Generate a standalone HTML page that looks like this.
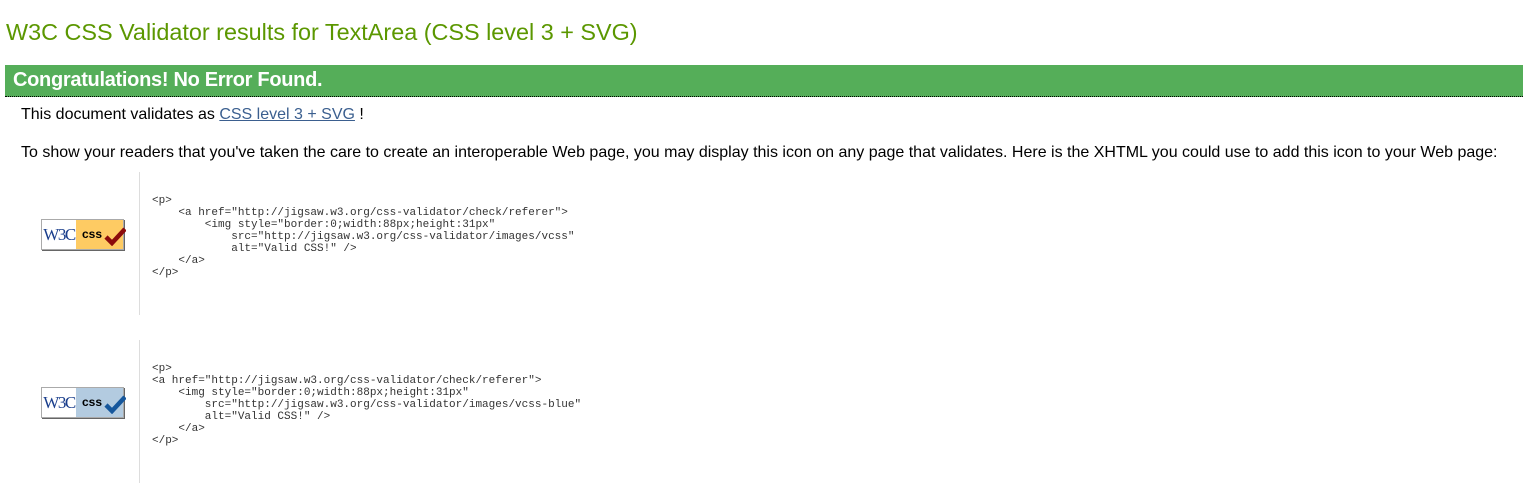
<!DOCTYPE html>
<html><head><meta charset="utf-8"><style>
body{margin:0;background:#fff;font-family:"Liberation Sans",Arial,sans-serif;color:#000;width:1523px;height:483px;overflow:hidden;position:relative}
h2{position:absolute;left:6px;top:19px;margin:0;font-weight:normal;font-size:23.4px;color:#5b9700}
.bar{position:absolute;left:5px;top:65px;width:1518px;height:31px;background:#55ae59;border-bottom:1px dotted #000}
.bar span{position:absolute;left:8px;top:4px;color:#fff;font-weight:bold;font-size:20px;letter-spacing:-0.3px}
p.t{position:absolute;left:21px;margin:0;font-size:16px}
a{color:#3b5f8f}
.vl{position:absolute;left:139px;width:1px;background:#ddd}
pre{position:absolute;left:152px;margin:0;font-family:"Liberation Mono","DejaVu Sans Mono",monospace;font-size:11px;line-height:12px;color:#333}
.badge{position:absolute;left:41px;width:83px;height:31px;border:1px solid #aaa;box-sizing:border-box;box-shadow:1px 1px 0 #666}
.badge .w{position:absolute;left:0;top:0;width:34px;height:29px;background:#fff;font-family:"Liberation Serif",serif;color:#1a3e8c;font-size:17px;line-height:29px;text-align:center;letter-spacing:-1.5px}
.badge .c{position:absolute;left:34px;top:0;right:0;height:29px}
.badge .c b{position:absolute;left:6px;top:7px;font-size:12px;font-family:"Liberation Sans",sans-serif}
</style></head><body>
<h2>W3C CSS Validator results for TextArea (CSS level 3 + SVG)</h2>
<div class="bar"><span>Congratulations! No Error Found.</span></div>
<p class="t" style="top:106px">This document validates as <a href="#">CSS level 3 + SVG</a> !</p>
<p class="t" style="top:144px">To show your readers that you've taken the care to create an interoperable Web page, you may display this icon on any page that validates. Here is the XHTML you could use to add this icon to your Web page:</p>
<div class="vl" style="top:172px;height:143px"></div>
<div class="vl" style="top:340px;height:143px"></div>
<div class="badge" style="top:219px"><div class="w">W3C</div><div class="c" style="background:#fecb63"><b>css</b><svg style="position:absolute;left:28px;top:6px" width="22" height="20"><path d="M2 11 L8 17 L21 3" stroke="#8b0b0b" stroke-width="4.5" fill="none"/></svg></div></div>
<div class="badge" style="top:387px"><div class="w">W3C</div><div class="c" style="background:#b3cbe0"><b>css</b><svg style="position:absolute;left:28px;top:6px" width="22" height="20"><path d="M2 11 L8 17 L21 3" stroke="#16579c" stroke-width="4.5" fill="none"/></svg></div></div>
<pre style="top:195px">&lt;p&gt;
    &lt;a href="http://jigsaw.w3.org/css-validator/check/referer"&gt;
        &lt;img style="border:0;width:88px;height:31px"
            src="http://jigsaw.w3.org/css-validator/images/vcss"
            alt="Valid CSS!" /&gt;
    &lt;/a&gt;
&lt;/p&gt;</pre>
<pre style="top:363px">&lt;p&gt;
&lt;a href="http://jigsaw.w3.org/css-validator/check/referer"&gt;
    &lt;img style="border:0;width:88px;height:31px"
        src="http://jigsaw.w3.org/css-validator/images/vcss-blue"
        alt="Valid CSS!" /&gt;
    &lt;/a&gt;
&lt;/p&gt;</pre>
</body></html>
